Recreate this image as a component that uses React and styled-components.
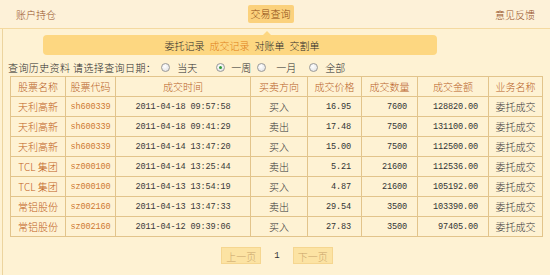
import React from "react";
import styled, { createGlobalStyle } from "styled-components";

const Global = createGlobalStyle`
  html, body { margin: 0; padding: 0; }
  body {
    background: #fef2d3;
    font-family: "Noto Sans CJK SC", "Liberation Sans", sans-serif;
    font-weight: 300;
    font-size: 10px;
    color: #333;
    width: 550px;
    height: 275px;
    overflow: hidden;
  }
`;

const Header = styled.div`
  height: 28px;
  display: grid;
  grid-template-columns: 1fr auto 1fr;
  align-items: center;
  padding: 0 15px 0 16px;
  background: #fdf1d8;
  border-bottom: 1px solid #f4d9a0;
`;

const HeadLink = styled.span`
  color: #94501e;
  font-size: 10px;
  text-align: ${(p) => (p.$right ? "right" : "left")};
`;

const Tab = styled.span`
  background: #fbd17c;
  color: #8c4a12;
  font-size: 10px;
  padding: 2px 3px;
  line-height: 14px;
  margin-right: 10px;
  border-radius: 2px;
`;

const Panel = styled.div`
  margin-left: 2px;
  border-left: 1px solid #ecd49e;
  padding: 6px 0 0 0;
  height: 240px;
`;

const SubBar = styled.div`
  position: relative;
  margin-left: 40px;
  width: 394px;
  height: 20px;
  background: #fdd781;
  border-radius: 4px;
  display: flex;
  justify-content: center;
  align-items: center;
  gap: 5px;
  padding-left: 4px;
  box-sizing: border-box;
  &::before {
    content: "";
    position: absolute;
    top: -4px;
    left: 220px;
    border-left: 4px solid transparent;
    border-right: 4px solid transparent;
    border-bottom: 4px solid #fdd781;
  }
`;

const SubItem = styled.span`
  color: ${(p) => (p.$active ? "#e07f17" : "#2a2a2a")};
  font-size: 10px;
`;

const QueryLine = styled.div`
  display: flex;
  align-items: center;
  height: 16px;
  margin-top: 4px;
  padding-left: 5px;
  color: #2a2a2a;
  font-size: 10px;
`;

const Label = styled.span`
  letter-spacing: ${(p) => (p.$wide ? "0.4px" : "0")};
`;

const Radio = styled.span`
  width: 9px;
  height: 9px;
  border-radius: 50%;
  border: 1px solid #9a9a9a;
  background: radial-gradient(circle at 40% 35%, #ffffff 0%, #e4e4e4 80%);
  box-sizing: border-box;
  margin: 0 ${(p) => p.$gap}px 0 ${(p) => p.$left}px;
  display: inline-flex;
  align-items: center;
  justify-content: center;
  &::after {
    content: "";
    width: 3px;
    height: 3px;
    border-radius: 50%;
    background: ${(p) => (p.$checked ? "#2f9a3a" : "transparent")};
  }
`;

const Table = styled.table`
  margin: 1px 0 0 7px;
  width: 532px;
  border-collapse: collapse;
  table-layout: fixed;
`;

const Th = styled.th`
  height: 19px;
  border: 1px solid #e2c48b;
  color: #b8601f;
  font-weight: 300;
  font-size: 10px;
  padding: 0;
  text-align: center;
`;

const Td = styled.td`
  height: 19px;
  border: 1px solid #e2c48b;
  padding: 0 ${(p) => (p.$align === "right" ? "10px" : "0")} 0 0;
  text-align: ${(p) => p.$align || "center"};
  color: ${(p) => p.$color || "#333"};
  font-size: ${(p) => (p.$mono ? "8.6px" : "10px")};
  font-weight: ${(p) => (p.$mono ? 400 : 300)};
  font-family: ${(p) =>
    p.$mono
      ? `"Liberation Mono", "DejaVu Sans Mono", monospace`
      : `"Noto Sans CJK SC", "Liberation Sans", sans-serif`};
  letter-spacing: ${(p) => (p.$mono ? "-0.15px" : "0")};
  white-space: nowrap;
`;

const Pager = styled.div`
  display: flex;
  justify-content: center;
  align-items: center;
  gap: 13px;
  margin-top: 10px;
  padding-left: 1px;
`;

const PageBtn = styled.span`
  width: 40px;
  height: 17px;
  line-height: 17px;
  text-align: center;
  background: #fce3a3;
  border: 1px solid #f5d690;
  box-sizing: border-box;
  color: #c9a46a;
  font-size: 10px;
`;

const PageNum = styled.span`
  color: #333;
  font-family: "Liberation Mono", monospace;
  font-size: 9px;
`;

const rows = [
  ["天利高新", "sh600339", "2011-04-18 09:57:58", "买入", "16.95", "7600", "128820.00"],
  ["天利高新", "sh600339", "2011-04-18 09:41:29", "卖出", "17.48", "7500", "131100.00"],
  ["天利高新", "sh600339", "2011-04-14 13:47:20", "买入", "15.00", "7500", "112500.00"],
  ["TCL 集团", "sz000100", "2011-04-14 13:25:44", "卖出", "5.21", "21600", "112536.00"],
  ["TCL 集团", "sz000100", "2011-04-13 13:54:19", "买入", "4.87", "21600", "105192.00"],
  ["常铝股份", "sz002160", "2011-04-13 13:47:33", "卖出", "29.54", "3500", "103390.00"],
  ["常铝股份", "sz002160", "2011-04-12 09:39:06", "买入", "27.83", "3500", "97405.00"],
];

const widths = [55, 50, 135, 57, 54, 56, 71, 54];
const heads = ["股票名称", "股票代码", "成交时间", "买卖方向", "成交价格", "成交数量", "成交金额", "业务名称"];

export default function App() {
  return (
    <>
      <Global />
      <Header>
        <HeadLink>账户持仓</HeadLink>
        <Tab>交易查询</Tab>
        <HeadLink $right>意见反馈</HeadLink>
      </Header>
      <Panel>
        <SubBar>
          <SubItem>委托记录</SubItem>
          <SubItem $active>成交记录</SubItem>
          <SubItem>对账单</SubItem>
          <SubItem>交割单</SubItem>
        </SubBar>
        <QueryLine>
          <Label $wide>查询历史资料 请选择查询日期：</Label>
          <Radio $left={5} $gap={7} />
          <Label>当天</Label>
          <Radio $left={19} $gap={6} $checked />
          <Label>一周</Label>
          <Radio $left={6} $gap={10} />
          <Label>一月</Label>
          <Radio $left={13} $gap={7} />
          <Label>全部</Label>
        </QueryLine>
        <Table>
          <colgroup>
            {widths.map((w, i) => (
              <col key={i} style={{ width: w }} />
            ))}
          </colgroup>
          <thead>
            <tr>
              {heads.map((h) => (
                <Th key={h}>{h}</Th>
              ))}
            </tr>
          </thead>
          <tbody>
            {rows.map((r, i) => (
              <tr key={i}>
                <Td $color="#c0601a">{r[0]}</Td>
                <Td $mono $color="#cf7a32">{r[1]}</Td>
                <Td $mono $color="#3a3a3a">{r[2]}</Td>
                <Td>{r[3]}</Td>
                <Td $mono $align="right">{r[4]}</Td>
                <Td $mono $align="right">{r[5]}</Td>
                <Td $mono $align="right">{r[6]}</Td>
                <Td>委托成交</Td>
              </tr>
            ))}
          </tbody>
        </Table>
        <Pager>
          <PageBtn>上一页</PageBtn>
          <PageNum>1</PageNum>
          <PageBtn>下一页</PageBtn>
        </Pager>
      </Panel>
    </>
  );
}
